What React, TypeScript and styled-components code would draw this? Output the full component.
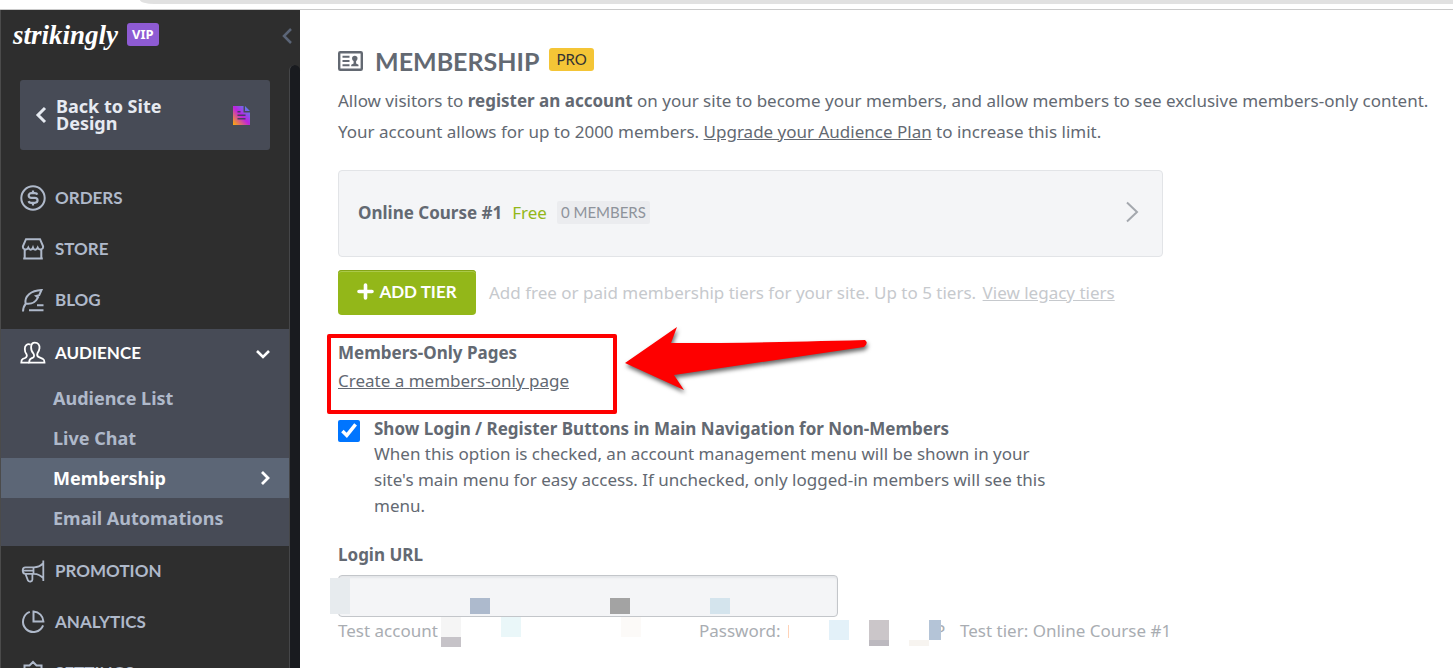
import React from "react";
import styled, { createGlobalStyle } from "styled-components";

const Global = createGlobalStyle`
  *, *::before, *::after { box-sizing: border-box; }
  body { margin: 0; background: #fff; color: #636972; font-family: "Noto Sans", "Open Sans", sans-serif; font-size: 17px; }
  a { color: inherit; }
  h1, h2, p, ul { margin: 0; padding: 0; }
  ul { list-style: none; }
`;

const Page = styled.div`
  display: flex;
  flex-direction: column;
  height: 100vh;
  overflow: hidden;
`;
const BrowserEdge = styled.div`
  flex: none;
  height: 10px;
  padding-left: 140px;
  border-bottom: 1px solid #cacaca;
`;
const AddressBar = styled.div`
  height: 4px;
  background: #e1e1e1;
  border-bottom-left-radius: 14px 4px;
`;
const Shell = styled.div`
  display: flex;
  flex: 1;
  min-height: 0;
`;

/* Sidebar */
const Sidebar = styled.aside`
  display: flex;
  flex-direction: column;
  flex: none;
  width: 300px;
  background: #2e2e2e;
  border-left: 1px solid #4b4b4b;
`;
const Brand = styled.header`
  display: flex;
  flex: none;
  align-items: center;
  gap: 9px;
  height: 55px;
  padding: 0 7px 6px 12px;
`;
const Logo = styled.span`
  font: italic bold 27px/30px "Liberation Serif", serif;
  color: #fff;
`;
const VipBadge = styled.span`
  padding: 0 5px;
  border-radius: 3px;
  background: #8e5bd3;
  color: #fff;
  font: bold 13px/23px "Noto Sans", sans-serif;
`;
const CollapseButton = styled.button`
  display: flex;
  margin-left: auto;
  padding: 2px 0 0;
  border: 0;
  background: none;
  color: #5b6577;
`;
const SidebarBody = styled.div`
  display: flex;
  flex: 1;
  min-height: 0;
`;
const SidebarScroll = styled.div`
  flex: 1;
  overflow: hidden;
  padding-top: 15px;
`;
const ScrollTrack = styled.div`
  width: 11px;
  border-left: 1px solid #454648;
  border-radius: 6px 6px 0 0;
  background: #191b1f;
`;
const BackLink = styled.a`
  display: flex;
  align-items: center;
  height: 70px;
  margin: 0 19px 23px;
  padding: 0 20px 0 14px;
  border-radius: 3px;
  background: #474b56;
  color: #e6eaf1;
  font: bold 18px/17px "Noto Sans", sans-serif;
  text-decoration: none;
  svg { flex: none; }
`;
const BackText = styled.span`
  flex: 1;
  padding: 0 50px 0 8px;
`;
const NavLink = styled.a<{ $active?: boolean }>`
  display: flex;
  align-items: center;
  gap: 9px;
  height: 51px;
  padding: 0 18px 2px 19px;
  color: ${(p) => (p.$active ? "#fff" : "#afb9ca")};
  font: bold 17px/24px Lato, sans-serif;
  text-decoration: none;
  svg:last-child:not(:first-child) { margin-left: auto; }
`;
const Group = styled.li`
  margin-top: 3px;
  padding-bottom: 8px;
  background: #474b56;
  > a { height: 49px; }
`;
const SubLink = styled.a<{ $active?: boolean }>`
  display: flex;
  align-items: center;
  justify-content: space-between;
  height: 40px;
  padding: 0 19px 0 52px;
  background: ${(p) => (p.$active ? "#5c6676" : "transparent")};
  color: ${(p) => (p.$active ? "#fff" : "#afb9ca")};
  font: bold 18px/24px "Noto Sans", sans-serif;
  text-decoration: none;
`;

/* Main column */
const Main = styled.main`
  flex: 1;
  min-width: 0;
  overflow: hidden;
  padding: 36px 0 0 38px;
`;
const TitleRow = styled.div`
  display: flex;
  align-items: center;
  gap: 12px;
  height: 30px;
`;
const Title = styled.h1`
  font: bold 25px/30px Lato, sans-serif;
`;
const ProBadge = styled.span`
  margin: 0 0 4px -2px;
  padding: 0 7px;
  border-radius: 3px;
  background: #f4c536;
  color: #333;
  font: 15px/23px Lato, sans-serif;
`;
const Intro = styled.p`
  margin-top: 9px;
  line-height: 31px;
`;
const TierCard = styled.a`
  display: flex;
  align-items: center;
  gap: 10px;
  width: 825px;
  max-width: 100%;
  height: 87px;
  margin-top: 23px;
  padding: 0 19px 2px;
  border: 1px solid #e2e4e7;
  border-radius: 4px;
  background: #f4f5f7;
  text-decoration: none;
  svg { margin-left: auto; }
`;
const Price = styled.span`
  color: #93b719;
`;
const MemberCount = styled.span`
  padding: 0 4px;
  border-radius: 2px;
  background: #ebecef;
  color: #8e939b;
  font: 15px/23px Lato, sans-serif;
`;
const AddRow = styled.div`
  display: flex;
  align-items: center;
  gap: 13px;
  margin-top: 13px;
  color: #c6c9cd;
  a { margin-left: 2px; }
`;
const AddButton = styled.button`
  display: flex;
  align-items: center;
  justify-content: center;
  gap: 5px;
  width: 138px;
  height: 45px;
  padding: 0 0 2px;
  border: 0;
  border-radius: 4px;
  background: #93b719;
  box-shadow: inset 0 1px #85a517, inset 0 2px #abc94a;
  color: #fff;
  font: bold 17px/24px Lato, sans-serif;
`;
const PagesSection = styled.section`
  position: relative;
  margin-top: 24px;
  line-height: 28px;
`;
const Heading = styled.h2`
  font-size: 17px;
  font-weight: 700;
  line-height: inherit;
`;
const Highlight = styled.div`
  position: absolute;
  top: -5px;
  left: -11px;
  width: 290px;
  height: 80px;
  border: 4px solid #fe0000;
  border-radius: 2px;
`;
const Arrow = styled.svg`
  position: absolute;
  top: -19px;
  left: 282px;
  filter: drop-shadow(1px 3px 2px rgba(0, 0, 0, 0.6));
`;
const Option = styled.div`
  display: flex;
  gap: 14px;
  width: 726px;
  max-width: 100%;
  margin-top: 20px;
`;
const Checkbox = styled.input`
  flex: none;
  width: 22px;
  height: 22px;
  margin: 5px 0 0;
  accent-color: #0075ff;
`;
const OptionText = styled.div`
  padding-top: 1px;
  line-height: 25px;
  label { font-weight: 700; }
  p { line-height: 26px; }
`;
const LoginSection = styled.section`
  margin-top: 22px;
`;
const FieldLabel = styled.label`
  display: block;
  font-weight: 700;
  line-height: 28px;
`;
const LoginField = styled.div`
  position: relative;
  margin-top: 6px;
`;
const UrlInput = styled.input`
  display: block;
  width: 500px;
  max-width: 100%;
  height: 42px;
  padding: 0 12px;
  border: 1px solid #c3c6ca;
  border-radius: 4px;
  background: #f4f5f7;
  box-shadow: inset 0 2px 2px #e4e6e9;
  font: inherit;
`;
const Credentials = styled.p`
  display: grid;
  grid-template-columns: 361px 236px 25px auto;
  color: #a9adb2;
  line-height: 28px;
`;
const Mosaic = styled.i<{ $x: number; $y: number; $w: number; $h: number; $c: string }>`
  position: absolute;
  left: ${(p) => p.$x}px;
  top: ${(p) => p.$y}px;
  width: ${(p) => p.$w}px;
  height: ${(p) => p.$h}px;
  background: ${(p) => p.$c};
`;

const mosaics: [number, number, number, number, string][] = [
  [-8, 3, 20, 36, "#e7ebee"],
  [132, 23, 20, 16, "#adbacd"],
  [272, 23, 20, 16, "#a3a3a3"],
  [372, 23, 20, 16, "#d4e4ed"],
  [103, 42, 20, 20, "#f5f5f5"],
  [103, 62, 20, 10, "#c6c3c8"],
  [163, 42, 20, 20, "#eaf7f9"],
  [283, 42, 20, 20, "#fcfaf8"],
  [450, 50, 1, 13, "#ffd3b8"],
  [491, 45, 20, 20, "#e3f1f9"],
  [531, 45, 20, 20, "#cbc6c9"],
  [531, 65, 20, 6, "#bcb9bf"],
  [571, 65, 20, 6, "#f7f4f0"],
  [591, 45, 12, 20, "#b4c4d7"],
];

const Icon = ({ children, size = 26, stroke = 2 }: { children: React.ReactNode; size?: number; stroke?: number }) => (
  <svg width={size} height={size} viewBox={`0 0 ${size} ${size}`} fill="none" stroke="currentColor" strokeWidth={stroke} aria-hidden="true">
    {children}
  </svg>
);

const icons = {
  orders: (
    <Icon>
      <circle cx="13" cy="13" r="11.7" />
      <path d="M17.3 9.6C17 8.5 16 8.2 14.8 8.2h-3.4c-3.6 0-3.6 4.7 0 4.7h3.3c3.8 0 3.8 4.9 0 4.9h-3.3c-1.6 0-2.5-.6-2.8-1.7M13 5.4v2.8M13 17.8v2.8" strokeWidth="2.2" />
    </Icon>
  ),
  store: (
    <Icon>
      <path d="M6 3.2h14l3 6.8c.8 3.5-3.8 5-5.3 1.7-1.2 2.7-3.8 2.7-4.7 0-1 2.7-3.6 2.7-4.7 0C6.800 15 2.200 13.500 3 10zM4.700 14v8.500M21.300 14v8.500M3.200 22.600h19.600" />
    </Icon>
  ),
  blog: (
    <Icon>
      <path d="M3 24.500c.3-4 1.200-6 2.600-7.500C4 9 11 3.500 21.500 3l-2.300 5.200-3 .8 1.800 1.400c-2.700 5.500-6 7.200-12.400 6.200M17 18.300h6.500M9 23.200h14.500" />
    </Icon>
  ),
  audience: (
    <Icon stroke={1.800}>
      <path d="M14.800 2.600c3.400 0 5 2.400 4.700 5.600-.2 2.200-1 3.800-2 4.900-.6 1.500-.2 3.400 1.500 4.100l3.800 1.600c1.300.6 1.700 1.800 1.700 3.800H9.200c0-2.300.2-3.300 1.700-4l2-1c1.500-.8 1.400-2.600.6-4-1.600-1.600-2.500-4-2.400-6.500.1-2.900 1.300-4.500 3.700-4.500z" />
      <path d="M10.600 4.600C7.300 3.400 4.700 5.200 4.800 9c0 2.500.7 4 1.700 5.200.8 1.400.2 3-1.500 3.800l-2.300 1c-1.100.6-1.400 1.700-1.400 3.600h8" />
    </Icon>
  ),
  promotion: (
    <Icon>
      <path d="M23.300 2.500v20.500M23 5.500c-3 3-6 3.800-9 3.800H5.500c-2 0-2.800 1-2.800 3.200 0 2.300.9 3.300 2.800 3.300H14c3 0 6 .8 9 4.200M13.500 9.300v6.500M3 12.600h10.500M5.500 16l2.500 6.500c1 1.600 4.400 1.400 4.400-1V16" strokeWidth="1.800" />
    </Icon>
  ),
  analytics: (
    <Icon>
      <path d="M9.800 2.900a10.400 10.400 0 1 0 13.300 13.500M13.500 2.600c5.500.2 9.800 4.500 9.900 10h-9.900z" />
    </Icon>
  ),
  settings: (
    <Icon>
      <path d="M4.500 5.500h5L13 2l3.500 3.500h5v5L25 13l-3.500 3.500v5h-5L13 25l-3.500-3.500h-5v-5L1 13l3.500-2.500z" />
      <circle cx="13" cy="13" r="4" />
    </Icon>
  ),
};

const ChevronDown = () => <Icon size={16} stroke={2.600}><path d="M2 6l6 6 6-6" /></Icon>;
const ChevronRight = () => (
  <svg width="10" height="14" viewBox="0 0 10 14" fill="none" stroke="currentColor" strokeWidth="2.800" aria-hidden="true"><path d="M2 1l6 6-6 6" /></svg>
);

const subItems = ["Audience List", "Live Chat", "Membership", "Email Automations"];

function Nav() {
  return (
    <nav>
      <ul>
        <li><NavLink href="#orders">{icons.orders}ORDERS</NavLink></li>
        <li><NavLink href="#store">{icons.store}STORE</NavLink></li>
        <li><NavLink href="#blog">{icons.blog}BLOG</NavLink></li>
        <Group>
          <NavLink href="#audience" $active>{icons.audience}AUDIENCE<ChevronDown /></NavLink>
          <ul>
            {subItems.map((name) => (
              <li key={name}>
                <SubLink href="#audience" $active={name === "Membership"}>
                  {name}
                  {name === "Membership" && <ChevronRight />}
                </SubLink>
              </li>
            ))}
          </ul>
        </Group>
        <li><NavLink href="#promotion">{icons.promotion}PROMOTION</NavLink></li>
        <li><NavLink href="#analytics">{icons.analytics}ANALYTICS</NavLink></li>
        <li><NavLink href="#settings">{icons.settings}SETTINGS</NavLink></li>
      </ul>
    </nav>
  );
}

export default function App() {
  return (
    <Page>
      <Global />
      <BrowserEdge><AddressBar /></BrowserEdge>
      <Shell>
        <Sidebar>
          <Brand>
            <Logo>strikingly</Logo>
            <VipBadge>VIP</VipBadge>
            <CollapseButton aria-label="Collapse sidebar">
              <svg width="12" height="16" viewBox="0 0 12 16" fill="none" stroke="currentColor" strokeWidth="2.500"><path d="M10 1L3 8l7 7" /></svg>
            </CollapseButton>
          </Brand>
          <SidebarBody>
            <SidebarScroll>
              <BackLink href="#design">
                <svg width="14" height="18" viewBox="0 0 14 18" fill="none" stroke="currentColor" strokeWidth="3"><path d="M11 2L4 9l7 7" /></svg>
                <BackText>Back to Site Design</BackText>
                <svg width="17" height="19" viewBox="0 0 17 19">
                  <defs>
                    <linearGradient id="doc" x1="0" y1="1" x2="1" y2="0">
                      <stop offset="0" stopColor="#ffb000" />
                      <stop offset=".5" stopColor="#bd22e0" />
                      <stop offset="1" stopColor="#3f9bf0" />
                    </linearGradient>
                  </defs>
                  <path d="M0 0h10.500v6.500H17V19H0zM12 0l5 5h-5z" fill="url(#doc)" />
                  <path d="M4.500 5.800h3M4.500 9.300h8M4.500 12.800h8" stroke="#4b3b69" strokeWidth="1.600" />
                </svg>
              </BackLink>
              <Nav />
            </SidebarScroll>
            <ScrollTrack />
          </SidebarBody>
        </Sidebar>
        <Main>
          <TitleRow>
            <svg width="25" height="20" viewBox="0 0 25 20" fill="none" stroke="currentColor" aria-hidden="true">
              <rect x="1.200" y="1.200" width="22.600" height="17.600" rx="1" strokeWidth="2.400" />
              <path d="M4.500 5.800h7M4.500 10h7M4.500 14.200h7" strokeWidth="1.900" />
              <path d="M16.800 4.700c3.400 0 3.400 4 1.300 5.400v2.300l2.400 1.300v1.500h-7.300v-1.500l2.400-1.300v-2.300c-2.200-1.400-2.200-5.400 1.200-5.400z" fill="currentColor" stroke="none" />
            </svg>
            <Title>MEMBERSHIP</Title>
            <ProBadge>PRO</ProBadge>
          </TitleRow>
          <Intro>
            Allow visitors to <b>register an account</b> on your site to become your members, and allow members to see exclusive members-only content.
            <br />
            Your account allows for up to 2000 members. <a href="#upgrade">Upgrade your Audience Plan</a> to increase this limit.
          </Intro>
          <TierCard href="#tier">
            <b>Online Course #1</b>
            <Price>Free</Price>
            <MemberCount>0 MEMBERS</MemberCount>
            <svg width="20" height="24" viewBox="0 0 20 24" fill="none" stroke="#a4a8ae" strokeWidth="2"><path d="M4 1.500L14 11 4 20.500" /></svg>
          </TierCard>
          <AddRow>
            <AddButton>
              <svg width="17" height="17" viewBox="0 0 17 17" stroke="currentColor" strokeWidth="3.600" strokeLinecap="round"><path d="M8.500 2v13M2 8.500h13" /></svg>
              ADD TIER
            </AddButton>
            <p>Add free or paid membership tiers for your site. Up to 5 tiers. <a href="#legacy">View legacy tiers</a></p>
          </AddRow>
          <PagesSection>
            <Heading>Members-Only Pages</Heading>
            <a href="#create">Create a members-only page</a>
            <Highlight />
            <Arrow width="260" height="80" viewBox="0 0 260 80" aria-hidden="true">
              <path d="M5 43L57 7l-6 16c60 0 120-1 194-3q4 3-1 7L54 55l10 15z" fill="#fe0000" />
            </Arrow>
          </PagesSection>
          <Option>
            <Checkbox type="checkbox" id="show-login" defaultChecked />
            <OptionText>
              <label htmlFor="show-login">Show Login / Register Buttons in Main Navigation for Non-Members</label>
              <p>When this option is checked, an account management menu will be shown in your site's main menu for easy access. If unchecked, only logged-in members will see this menu.</p>
            </OptionText>
          </Option>
          <LoginSection>
            <FieldLabel htmlFor="login-url">Login URL</FieldLabel>
            <LoginField>
              <UrlInput id="login-url" type="text" />
              <Credentials>
                <span>Test account</span>
                <span>Password:</span>
                <span>P</span>
                <span>Test tier: Online Course #1</span>
              </Credentials>
              {mosaics.map(([x, y, w, h, c]) => (
                <Mosaic key={`${x}-${y}`} $x={x} $y={y} $w={w} $h={h} $c={c} />
              ))}
            </LoginField>
          </LoginSection>
        </Main>
      </Shell>
    </Page>
  );
}
